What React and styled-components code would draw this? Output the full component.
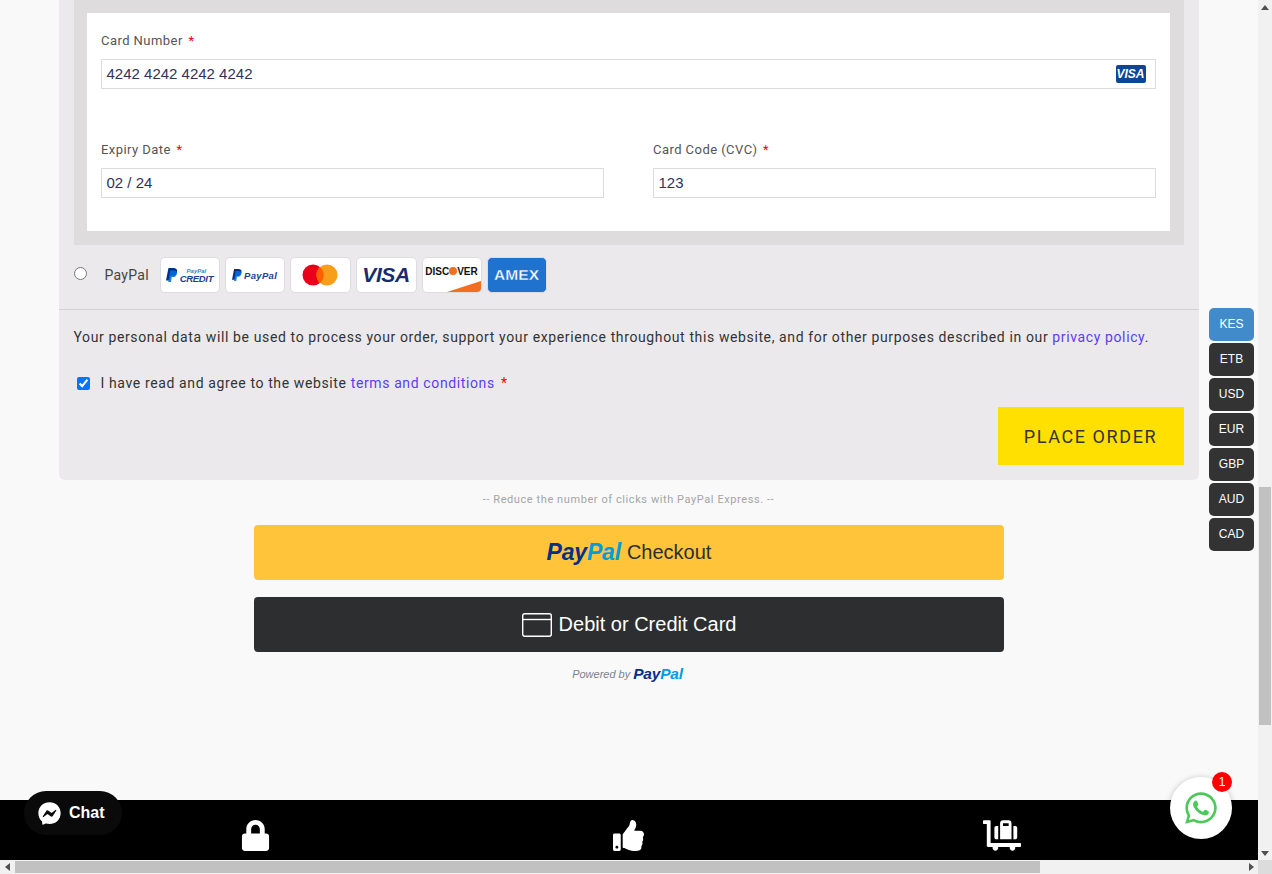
import React from "react";
import styled, { createGlobalStyle } from "styled-components";
import { FaFacebookMessenger, FaLock, FaLuggageCart, FaThumbsUp, FaWhatsapp } from "react-icons/fa";

const currencies = ["KES", "ETB", "USD", "EUR", "GBP", "AUD", "CAD"];

export default function App() {
  return (
    <>
      <GlobalStyle />
      <Viewport>
        <Page>
          <Main>
            <Panel>
              <CardBox>
                <CardForm>
                  <Field>
                    <Label>Card Number <Star>*</Star></Label>
                    <InputBox>
                      <InputText>4242 4242 4242 4242</InputText>
                      <VisaTag>VISA</VisaTag>
                    </InputBox>
                  </Field>
                  <TwoCols>
                    <Field>
                      <Label>Expiry Date <Star>*</Star></Label>
                      <InputBox><InputText>02 / 24</InputText></InputBox>
                    </Field>
                    <Field>
                      <Label>Card Code (CVC) <Star>*</Star></Label>
                      <InputBox><InputText>123</InputText></InputBox>
                    </Field>
                  </TwoCols>
                </CardForm>
              </CardBox>

              <MethodRow>
                <input type="radio" name="method" />
                <MethodName>PayPal</MethodName>
                <Badge>
                  <PayPalMark size={14} />
                  <CreditStack>
                    <small>PayPal</small>
                    CREDIT
                  </CreditStack>
                </Badge>
                <Badge>
                  <PayPalMark size={12} />
                  <BadgePayPal>PayPal</BadgePayPal>
                </Badge>
                <Badge $wide>
                  <svg width="36" height="22" viewBox="0 0 36 22">
                    <circle cx="11" cy="11" r="10.5" fill="#eb001b" />
                    <circle cx="25" cy="11" r="10.5" fill="#f79e1b" />
                    <path d="M18 3a10.5 10.5 0 0 1 0 16a10.5 10.5 0 0 1 0-16z" fill="#ff5f00" />
                  </svg>
                </Badge>
                <Badge $wide>
                  <VisaWord>VISA</VisaWord>
                </Badge>
                <Badge>
                  <DiscoverWord>DISC<Dot />VER</DiscoverWord>
                  <DiscoverCorner viewBox="0 0 34 11" preserveAspectRatio="none">
                    <path d="M0 11L34 0v11z" fill="#f26e21" />
                  </DiscoverCorner>
                </Badge>
                <Badge $blue>
                  <AmexWord>AMEX</AmexWord>
                </Badge>
              </MethodRow>

              <Terms>
                <Notice>
                  Your personal data will be used to process your order, support your experience throughout this website, and for other purposes described in our <TextLink>privacy policy</TextLink>.
                </Notice>
                <CheckRow>
                  <input type="checkbox" defaultChecked />
                  <span>I have read and agree to the website <TextLink>terms and conditions</TextLink> <Star>*</Star></span>
                </CheckRow>
                <OrderRow>
                  <PlaceOrder>PLACE ORDER</PlaceOrder>
                </OrderRow>
              </Terms>
            </Panel>

            <Express>
              <ExpressNote>-- Reduce the number of clicks with PayPal Express. --</ExpressNote>
              <PayButton>
                <PayPalWord $size={23}><b>Pay</b><i>Pal</i></PayPalWord>
                <span>Checkout</span>
              </PayButton>
              <PayButton $dark>
                <svg width="30" height="24" viewBox="0 0 30 24" fill="none" stroke="#fff" strokeWidth="1.4">
                  <rect x="0.7" y="0.7" width="28.6" height="22.6" rx="2" />
                  <path d="M1 6.500h28" />
                </svg>
                <span>Debit or Credit Card</span>
              </PayButton>
              <Powered>
                Powered by <PayPalWord $size={15.5}><b>Pay</b><i>Pal</i></PayPalWord>
              </Powered>
            </Express>

            <Footer>
              <FooterCell><FaLock /></FooterCell>
              <FooterCell><FaThumbsUp /></FooterCell>
              <FooterCell $iconWidth={38}><FaLuggageCart /></FooterCell>
            </Footer>

            <Currencies>
              {currencies.map((code, i) => (
                <Currency key={code} $active={i === 0}>{code}</Currency>
              ))}
            </Currencies>

            <ChatPill>
              <FaFacebookMessenger />
              Chat
            </ChatPill>

            <WhatsApp>
              <FaWhatsapp />
              <Count>1</Count>
            </WhatsApp>
          </Main>

          <VBar>
            <Arrow $dir="up" />
            <VTrack><VThumb /></VTrack>
            <Arrow $dir="down" />
          </VBar>
        </Page>

        <HBar>
          <Arrow $dir="left" />
          <HTrack><HThumb /></HTrack>
          <Arrow $dir="right" />
          <Corner />
        </HBar>
      </Viewport>
    </>
  );
}

function PayPalMark({ size }) {
  return (
    <svg width={size * 0.85} height={size} viewBox="0 0 17 20">
      <path d="M3.500 0h7c3.600 0 6 1.800 5.400 5.300C15.200 9.400 12.400 11.500 8.800 11.500H6.500L5.300 18H0z" fill="#003087" />
      <path d="M6 3.500h5.500c2.800 0 4.700 1.500 4.200 4.300C15.100 11.100 12.800 13 9.900 13H8.300L7.200 20H3.200z" fill="#0070e0" opacity="0.85" />
    </svg>
  );
}

const GlobalStyle = createGlobalStyle`
  html, body {
    margin: 0;
    height: 100%;
    overflow: hidden;
  }
  body {
    background: #f9f9f9;
    font-family: "Roboto", "Liberation Sans", sans-serif;
  }
`;

const Viewport = styled.div`
  width: 1272px;
  height: 874px;
  display: flex;
  flex-direction: column;
  overflow: hidden;
`;

const Page = styled.div`
  flex: 1;
  display: flex;
  min-height: 0;
`;

const Main = styled.main`
  position: relative;
  flex: 1;
  display: flex;
  flex-direction: column;
  align-items: center;
  min-width: 0;
`;

const Panel = styled.section`
  width: 1140px;
  height: 480px;
  box-sizing: border-box;
  background: #ebe9ec;
  border-radius: 0 0 6px 6px;
  margin-right: 1px;
  display: flex;
  flex-direction: column;
`;

const CardBox = styled.div`
  margin: 0 15px;
  height: 245px;
  box-sizing: border-box;
  padding: 13px 14px 14px 13px;
  background: #dfdcde;
`;

const CardForm = styled.div`
  height: 218px;
  box-sizing: border-box;
  background: #fff;
  padding: 19px 14px 0;
  display: flex;
  flex-direction: column;
  gap: 52px;
`;

const Field = styled.div`
  display: flex;
  flex-direction: column;
  gap: 10px;
`;

const TwoCols = styled.div`
  display: grid;
  grid-template-columns: 1fr 1fr;
  gap: 49px;
`;

const Label = styled.label`
  font-size: 13px;
  line-height: 17px;
  letter-spacing: 0.45px;
  color: #555;
  padding-left: 0.5px;
`;

const Star = styled.span`
  color: #f00;
  margin-left: 2px;
`;

const InputBox = styled.div`
  height: 30px;
  box-sizing: border-box;
  border: 1px solid #dcdcdc;
  background: #fff;
  padding: 0 5px;
  display: flex;
  align-items: center;
  justify-content: space-between;
`;

const InputText = styled.span`
  font-family: "Liberation Sans", Arial, sans-serif;
  font-size: 15px;
  line-height: 17px;
  margin-top: -2px;
  color: #32325d;
`;

const VisaTag = styled.span`
  width: 30px;
  height: 18px;
  margin-right: 4px;
  border-radius: 2px;
  background: #0e4595;
  color: #fff;
  font: italic 700 12px "Liberation Sans", Arial, sans-serif;
  display: flex;
  align-items: center;
  justify-content: center;
`;

const MethodRow = styled.div`
  height: 65px;
  box-sizing: border-box;
  padding: 12px 15px 0;
  border-bottom: 1px solid #d3d1d4;
  display: flex;
  align-items: flex-start;
  gap: 5px;

  input {
    width: 13px;
    height: 13px;
    margin: 10px 13px 0 0;
  }
`;

const MethodName = styled.span`
  font-size: 14px;
  line-height: 36px;
  letter-spacing: 0.3px;
  color: #444;
  width: 50px;
`;

const Badge = styled.div`
  position: relative;
  width: ${(p) => (p.$wide ? "61px" : "60px")};
  height: 36px;
  box-sizing: border-box;
  border: 1px solid #dedcdf;
  border-radius: 5px;
  background: ${(p) => (p.$blue ? "#1f72cd" : "#fff")};
  overflow: hidden;
  display: flex;
  align-items: center;
  justify-content: center;
  gap: 2px;
`;

const CreditStack = styled.span`
  display: flex;
  flex-direction: column;
  align-items: center;
  font: italic 700 9.5px/9px "Liberation Sans", Arial, sans-serif;
  letter-spacing: -0.3px;
  color: #1c3f94;

  small {
    font-size: 6px;
    line-height: 6px;
    letter-spacing: 0;
    color: #2790c3;
  }
`;

const BadgePayPal = styled.span`
  font: italic 700 9.5px "Liberation Sans", Arial, sans-serif;
  letter-spacing: 0.3px;
  color: #1c3f94;
`;

const VisaWord = styled.span`
  font: italic 700 21px "Liberation Sans", Arial, sans-serif;
  color: #172b6d;
  letter-spacing: -0.4px;
`;

const DiscoverWord = styled.span`
  display: flex;
  align-items: center;
  margin-top: -8px;
  font: 700 10px "Liberation Sans", Arial, sans-serif;
  color: #111;
`;

const Dot = styled.i`
  width: 8px;
  height: 8px;
  border-radius: 50%;
  background: #f26e21;
`;

const DiscoverCorner = styled.svg`
  position: absolute;
  right: 0;
  bottom: 0;
  width: 34px;
  height: 11px;
`;

const AmexWord = styled.span`
  font: 700 15.5px "Liberation Sans", Arial, sans-serif;
  color: #fff;
  letter-spacing: 0.1px;
  -webkit-text-stroke: 0.35px #1f72cd;
`;

const Terms = styled.div`
  flex: 1;
  padding: 0 15px;
  display: flex;
  flex-direction: column;
  font-size: 14px;
  letter-spacing: 0.62px;
  color: #333;
`;

const Notice = styled.p`
  margin: 17px 0 0;
  line-height: 20px;
  white-space: nowrap;
`;

const TextLink = styled.a`
  color: #5b3cf5;
`;

const CheckRow = styled.label`
  margin-top: 26px;
  height: 20px;
  display: flex;
  align-items: center;
  gap: 11px;

  input {
    width: 13px;
    height: 13px;
    margin: 0 0 0 3px;
  }
`;

const OrderRow = styled.div`
  margin-top: 14px;
  display: flex;
  justify-content: flex-end;
`;

const PlaceOrder = styled.button`
  width: 186px;
  height: 58px;
  border: 0;
  background: #ffe000;
  color: #333;
  font-family: inherit;
  font-size: 18px;
  letter-spacing: 1.6px;
`;

const Express = styled.div`
  width: 750px;
  margin-right: 1px;
  display: flex;
  flex-direction: column;
  align-items: stretch;
`;

const ExpressNote = styled.div`
  margin: 11px 0 18px;
  height: 16px;
  line-height: 18px;
  font-size: 11px;
  letter-spacing: 0.58px;
  text-align: center;
  color: #a5a5a5;
`;

const PayButton = styled.div`
  height: 55px;
  margin-bottom: 17px;
  padding-left: 1px;
  border-radius: 4px;
  background: ${(p) => (p.$dark ? "#2c2e2f" : "#ffc439")};
  color: ${(p) => (p.$dark ? "#fff" : "#2c2e2f")};
  display: flex;
  align-items: center;
  justify-content: center;
  gap: ${(p) => (p.$dark ? "7px" : "6px")};
  font-family: "Liberation Sans", Arial, sans-serif;
  font-size: 20px;
`;

const PayPalWord = styled.span`
  font: italic 700 ${(p) => p.$size}px "Liberation Sans", Arial, sans-serif;
  letter-spacing: -0.2px;

  b {
    color: #003087;
  }
  i {
    color: #009cde;
  }
`;

const Powered = styled.div`
  margin-top: -5px;
  padding-right: 2px;
  height: 20px;
  display: flex;
  align-items: center;
  justify-content: center;
  gap: 3px;
  font: italic 11px "Liberation Sans", Arial, sans-serif;
  color: #7b8388;
`;

const Footer = styled.footer`
  margin-top: auto;
  align-self: stretch;
  height: 60px;
  box-sizing: border-box;
  padding: 20px 69px 0 69px;
  background: #000;
  color: #fff;
  display: grid;
  grid-template-columns: repeat(3, 1fr);
`;

const FooterCell = styled.div`
  display: flex;
  justify-content: center;
  font-size: 31px;
  line-height: 1;

  svg {
    display: block;
    width: ${(p) => p.$iconWidth || 31}px;
  }
`;

const Currencies = styled.div`
  position: absolute;
  top: 308px;
  left: 1209px;
  display: flex;
  flex-direction: column;
  gap: 2px;
`;

const Currency = styled.div`
  width: 45px;
  height: 33px;
  border-radius: 5px;
  background: ${(p) => (p.$active ? "#428bca" : "#333")};
  color: #fff;
  font: 12px/33px "Liberation Sans", Arial, sans-serif;
  text-align: center;
`;

const ChatPill = styled.div`
  position: absolute;
  left: 24px;
  top: 791px;
  width: 98px;
  height: 44px;
  box-sizing: border-box;
  padding-left: 14px;
  border-radius: 22px;
  background: #0a0a0a;
  color: #fff;
  display: flex;
  align-items: center;
  gap: 8px;
  font: 700 16px "Liberation Sans", Arial, sans-serif;

  svg {
    font-size: 23px;
  }
`;

const WhatsApp = styled.div`
  position: absolute;
  left: 1170px;
  top: 777px;
  width: 62px;
  height: 62px;
  border-radius: 50%;
  background: #fff;
  box-shadow: 0 1px 6px rgba(0, 0, 0, 0.25);
  color: #4dc95c;
  display: flex;
  align-items: center;
  justify-content: center;
  font-size: 36px;
`;

const Count = styled.span`
  position: absolute;
  top: -5px;
  right: 0;
  width: 20px;
  height: 20px;
  border-radius: 50%;
  background: #f00;
  color: #fff;
  font: 12px/20px "Liberation Sans", Arial, sans-serif;
  text-align: center;
`;

const VBar = styled.div`
  width: 14px;
  background: #f1f1f1;
  display: flex;
  flex-direction: column;
`;

const VTrack = styled.div`
  flex: 1;
  padding-top: 473px;
  box-sizing: border-box;
`;

const VThumb = styled.div`
  height: 238px;
  margin: 0 1px;
  background: #c1c1c1;
`;

const HBar = styled.div`
  height: 14px;
  background: #f1f1f1;
  display: flex;
`;

const HTrack = styled.div`
  flex: 1;
  padding: 1px 0;
  box-sizing: border-box;
`;

const HThumb = styled.div`
  width: 1025px;
  height: 12px;
  margin-left: 1px;
  background: #c1c1c1;
`;

const Corner = styled.div`
  width: 14px;
  background: #dcdcdc;
`;

const arrowShapes = {
  up: "border-width: 0 4px 5px; border-color: transparent transparent #505050;",
  down: "border-width: 5px 4px 0; border-color: #505050 transparent transparent;",
  left: "border-width: 4px 5px 4px 0; border-color: transparent #505050 transparent transparent;",
  right: "border-width: 4px 0 4px 5px; border-color: transparent transparent transparent #505050;",
};

const Arrow = styled.div`
  width: 14px;
  height: 14px;
  display: flex;
  align-items: center;
  justify-content: center;

  &::after {
    content: "";
    border-style: solid;
    ${(p) => arrowShapes[p.$dir]}
  }
`;
